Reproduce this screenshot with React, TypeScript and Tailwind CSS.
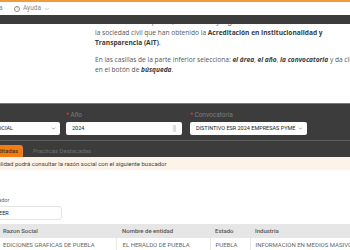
import { ChevronDown } from "lucide-react";

const ROW = {
  razon: "EDICIONES GRAFICAS DE PUEBLA",
  nombre: "EL HERALDO DE PUEBLA",
  estado: "PUEBLA",
  industria: "INFORMACIÓN EN MEDIOS MASIVOS",
};

export default function App() {
  return (
    <div className="relative h-[250px] w-[350px] overflow-hidden bg-white font-['Roboto',sans-serif]">
      {/* ── Top nav ───────────────────────── */}
      <header className="relative z-10 border-t-2 border-[#f39a3c] bg-white">
        <div className="flex h-[13px] items-center gap-[3px] text-[6.5px] text-[#8a8a8a]">
          <span className="-ml-[1px] w-[12px]">a</span>
          <span className="flex h-[6px] w-[6px] items-center justify-center rounded-full border border-[#8a8a8a] text-[4px] leading-none">
            !
          </span>
          <span>Ayuda</span>
          <ChevronDown className="h-[6px] w-[6px]" strokeWidth={2} />
        </div>
        <div className="h-[9px] bg-[#3c3c3c]" />
      </header>

      {/* ── Intro copy ────────────────────── */}
      <section className="-mt-[7px] pl-[95px] font-['Open_Sans',sans-serif] text-[6.6px] leading-[10.5px] text-[#555]">
        <p className="whitespace-nowrap">
          Reconoce a las empresas, instituciones y organizaciones de
          <br />
          la sociedad civil que han obtenido la{" "}
          <b className="text-[#3a3a3a]">Acreditación en Institucionalidad y</b>
          <br />
          <b className="text-[#3a3a3a]">Transparencia (AIT)</b>.
        </p>
        <p className="mt-[6px] whitespace-nowrap">
          En las casillas de la parte inferior selecciona:{" "}
          <b className="italic text-[#3a3a3a]">el área</b>,{" "}
          <b className="italic text-[#3a3a3a]">el año</b>,{" "}
          <b className="italic text-[#3a3a3a]">la convocatoria</b> y da clic
          <br />
          en el botón de <b className="italic text-[#3a3a3a]">búsqueda</b>.
        </p>
      </section>

      {/* ── Filters ───────────────────────── */}
      <section className="mt-[27px] border-t border-[#7a7a7a] bg-[#3c3c3c]">
        <div className="flex gap-[6px] pt-[7px] text-[6.5px]">
          <div className="-ml-[29px] flex w-[89px] flex-col gap-[3px]">
            <span className="h-[8px] text-[#7d7d7d]">
              <span className="text-[#e0312b]">*</span> Área
            </span>
            <div className="flex h-[13px] items-center justify-between rounded-[2px] bg-white px-[4px] text-[5.5px] text-[#222]">
              <span>RAZON SOCIAL</span>
              <ChevronDown className="h-[5px] w-[5px]" strokeWidth={2} />
            </div>
          </div>
          <div className="flex w-[116px] flex-col gap-[3px]">
            <span className="h-[8px] text-[#7d7d7d]">
              <span className="text-[#e0312b]">*</span> Año
            </span>
            <div className="flex h-[13px] items-center justify-between rounded-[2px] bg-white px-[6px] text-[5.5px] text-[#222]">
              <span>2024</span>
              <span className="h-[7px] w-[3px] rounded-[1px] bg-[#ddd]" />
            </div>
          </div>
          <div className="ml-[2px] flex w-[117px] flex-col gap-[3px]">
            <span className="h-[8px] text-[#7d7d7d]">
              <span className="text-[#e0312b]">*</span> Convocatoria
            </span>
            <div className="flex h-[13px] items-center justify-between rounded-[2px] bg-white pl-[6px] pr-[4px] text-[5.5px] text-[#222]">
              <span>DISTINTIVO ESR 2024 EMPRESAS PYME</span>
              <ChevronDown className="h-[5px] w-[5px]" strokeWidth={2} />
            </div>
          </div>
        </div>
        <div className="mt-[5px] border-t border-[#5e5e5e]" />
        <div className="flex items-end gap-[10px] pt-[4px] text-[6px]">
          <div className="-ml-[22px] flex h-[12px] items-center rounded-tr-[3px] bg-[#f47a12] pl-[8px] pr-[5px] text-[#2a2a2a]">
            Acreditadas
          </div>
          <div className="flex h-[12px] items-center text-[#6e6e6e]">
            Practicas Destacadas
          </div>
        </div>
      </section>

      {/* ── Notice ────────────────────────── */}
      <div className="flex h-[13px] items-center bg-[#fdf3e8] text-[6px] text-[#444]">
        <span className="-ml-[44px] whitespace-nowrap">
          En esta funcionalidad podrá consultar la razón social con el siguiente buscador
        </span>
      </div>

      {/* ── Search ────────────────────────── */}
      <div className="pt-[26px] text-[5.5px]">
        <span className="-ml-[14px] block text-[#666]">Buscador</span>
        <div className="-ml-[20px] mt-[2px] flex h-[14px] w-[82px] items-center rounded-[3px] border border-[#e4e4e4] px-[4px] text-[#222]">
          PROVEER
        </div>
      </div>

      {/* ── Results ───────────────────────── */}
      <table className="mt-[4px] w-[420px] border-collapse text-left text-[6px]">
        <thead>
          <tr className="h-[14px] bg-[#e6e6e6] text-[#555]">
            <th className="w-[116px] pl-[3px] font-medium">Razon Social</th>
            <th className="w-[94px] pl-[6px] font-medium">Nombre de entidad</th>
            <th className="w-[40px] pl-[5px] font-medium">Estado</th>
            <th className="pl-[5px] font-medium">Industria</th>
          </tr>
        </thead>
        <tbody>
          <tr className="h-[14px] text-[#666]">
            <td className="whitespace-nowrap border-r border-[#e8e8e8] pl-[3px]">{ROW.razon}</td>
            <td className="whitespace-nowrap border-r border-[#e8e8e8] pl-[6px]">{ROW.nombre}</td>
            <td className="whitespace-nowrap border-r border-[#e8e8e8] pl-[5px]">{ROW.estado}</td>
            <td className="whitespace-nowrap pl-[5px]">{ROW.industria}</td>
          </tr>
        </tbody>
      </table>
    </div>
  );
}
